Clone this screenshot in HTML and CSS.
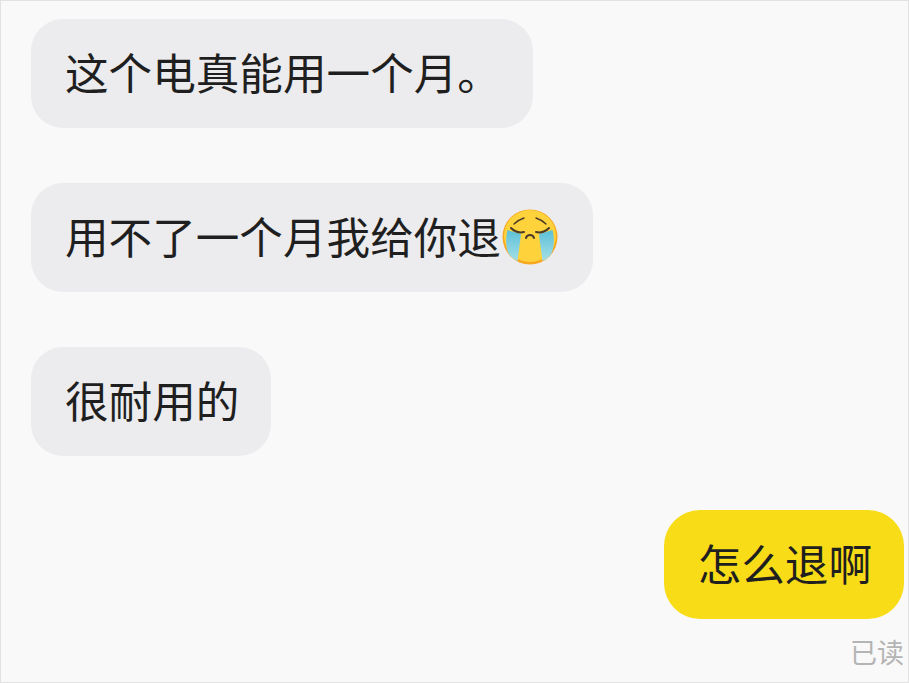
FILE: index.html
```html
<!DOCTYPE html>
<html lang="zh">
<head>
<meta charset="utf-8">
<title>聊天</title>
<link rel="stylesheet" href="styles.css">
</head>
<body>
<main class="chat">
  <div class="bubble">这个电真能用一个月。</div>
  <div class="bubble">用不了一个月我给你退<svg class="emoji" viewBox="0 0 60 60" aria-hidden="true">
      <defs>
        <linearGradient id="tear" x1="0" y1="0" x2="0" y2="1">
          <stop offset="0" stop-color="#5cc0d8"/>
          <stop offset="1" stop-color="#a4dfe6"/>
        </linearGradient>
      </defs>
      <circle cx="30" cy="30" r="27.5" fill="#f6a821"/>
      <circle cx="30" cy="29" r="26" fill="#fdd23a"/>
      <path d="M7.5 23 C5 33 6 43 9.500 48 C12 51 15 53 17.500 54 C18.500 46 20 36 21 27 Z" fill="url(#tear)"/>
      <path d="M52.500 23 C55 33 54 43 50.500 48 C48 51 45 53 42.500 54 C41.500 46 40 36 39 27 Z" fill="url(#tear)"/>
      <path class="line" d="M11 21 C15 25 20 26 24 25"/>
      <path class="line" d="M49 21 C45 25 40 26 36 25"/>
      <path class="line thin" d="M14 17 C17 14 21 12 24 11"/>
      <path class="line thin" d="M46 17 C43 14 39 12 36 11"/>
      <path class="line" d="M26 31 C27 27 33 27 34 31"/>
    </svg></div>
  <div class="bubble">很耐用的</div>
  <div class="bubble bubble-me">怎么退啊</div>
  <div class="status">已读</div>
</main>
</body>
</html>
```
FILE: styles.css
```css
html, body {
  margin: 0;
  padding: 0;
}
body {
  width: 909px;
  height: 683px;
  overflow: hidden;
  background: #f9f9fa;
}
.chat {
  box-sizing: border-box;
  width: 909px;
  height: 683px;
  padding: 18px 4px 0 30px;
  border: 1px solid #e2e2e2;
  display: flex;
  flex-direction: column;
  align-items: flex-start;
  font-family: "Noto Sans CJK SC", "Liberation Sans", sans-serif;
  color: #1f1f1f;
}
.bubble {
  box-sizing: border-box;
  height: 109px;
  padding: 0 32px 3px 34px;
  margin-bottom: 55px;
  display: flex;
  align-items: center;
  border-radius: 32px;
  background: #ececee;
  font-size: 43.6px;
  line-height: 1;
  white-space: nowrap;
}
.bubble-me {
  align-self: flex-end;
  margin-top: -1px;
  margin-bottom: 0;
  background: #f8dc17;
  border-radius: 36px;
}
.emoji {
  width: 60px;
  height: 60px;
  margin-top: 1px;
  margin-left: -1px;
  margin-right: 1px;
}
.line {
  fill: none;
  stroke: #4a3a2a;
  stroke-width: 2;
  stroke-linecap: round;
}
.thin {
  stroke-width: 1.4;
}
.status {
  align-self: flex-end;
  margin-top: 17px;
  font-size: 27px;
  line-height: 32px;
  color: #b4b4b4;
}
```
